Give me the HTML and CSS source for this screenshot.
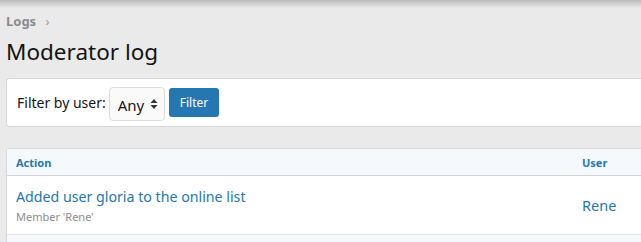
FILE: index.html
```html
<!DOCTYPE html>
<html lang="en">
<head>
    <meta charset="UTF-8">
    <title>Moderator log</title>
    <link rel="stylesheet" href="styles.css">
</head>
<body>

<div class="page">
    <!-- Breadcrumb -->
    <div class="crumbs">
        <a href="#">Logs</a>
        <span class="crumb-sep">&rsaquo;</span>
    </div>

    <h1 class="page-title">Moderator log</h1>

    <!-- Filter form -->
    <div class="block filter-block">
        <label for="userFilter">Filter by user:</label>
        <div class="select-wrap">
            <select id="userFilter" class="input-select">
                <option>Any</option>
            </select>
            <svg class="select-arrows" width="8" height="12" viewBox="0 0 8 12">
                <path d="M4 1 L7.5 5 H0.5 Z M4 11 L7.5 7 H0.5 Z" fill="#333"/>
            </svg>
        </div>
        <button class="button">Filter</button>
    </div>

    <!-- Log list -->
    <div class="block log-block">
        <div class="log-row log-head">
            <div class="cell-main">Action</div>
            <div class="cell-user">User</div>
        </div>
        <div class="log-row log-item">
            <div class="cell-main">
                <a href="#" class="log-action">Added user gloria to the online list</a>
                <div class="log-hint">Member 'Rene'</div>
            </div>
            <div class="cell-user"><a href="#">Rene</a></div>
        </div>
        <div class="log-footer"></div>
    </div>
</div>

</body>
</html>
```

FILE: styles.css
```css
body {
    margin: 0;
    padding: 0;
    background-color: #eaeaea;
    font-family: "Noto Sans", "Open Sans", sans-serif;
    color: #141414;
}
.page {
    padding: 12px 0 0 6px;
    background: linear-gradient(#b9b9b9, #eaeaea 8px);
}
a {
    text-decoration: none;
    color: #2577b1;
}
.crumbs {
    font-size: 13px;
    font-weight: bold;
    line-height: 18px;
}
.crumbs a {
    color: #8a8a8a;
}
.crumb-sep {
    color: #9a9a9a;
    font-weight: normal;
    margin-left: 6px;
}
.page-title {
    font-size: 22.5px;
    font-weight: normal;
    margin: 7px 0 0 0;
    line-height: 30px;
}
.block {
    background-color: #fff;
    border: 1px solid #d8d8d8;
    border-right: none;
    border-radius: 3px 0 0 3px;
}
.filter-block {
    margin-top: 11px;
    height: 49px;
    display: flex;
    align-items: center;
    padding-left: 10px;
    font-size: 14px;
    box-sizing: border-box;
}
.filter-block label {
    margin-right: 3px;
}
.select-wrap {
    position: relative;
    margin-right: 4px;
    margin-top: 2px;
}
.input-select {
    display: block;
    appearance: none;
    -webkit-appearance: none;
    height: 34px;
    width: 56px;
    padding: 2px 0 0 8px;
    font-family: inherit;
    font-size: 15px;
    color: #141414;
    background-color: #fafafa;
    border: 1px solid #dcdcdc;
    border-radius: 4px;
}
.select-arrows {
    position: absolute;
    right: 7px;
    top: 11px;
    pointer-events: none;
}
.button {
    height: 29px;
    padding: 0 11px;
    font-family: inherit;
    font-size: 12px;
    color: #fff;
    background-color: #2577b1;
    border: none;
    border-radius: 3px;
}
.log-block {
    margin-top: 21px;
    border-bottom: none;
    border-radius: 3px 0 0 0;
}
.log-row {
    display: flex;
    border-bottom: 1px solid #e3e3e3;
}
.log-head {
    background-color: #f5f9fd;
    border-bottom: 1px solid #d3d3d3;
    font-size: 11px;
    font-weight: bold;
    color: #2577b1;
    height: 26px;
    align-items: center;
}
.cell-main {
    flex: 1;
    padding-left: 9px;
}
.cell-user {
    width: 59px;
}
.log-item {
    height: 58px;
    align-items: center;
}
.log-action {
    font-size: 14.2px;
    line-height: 18px;
}
.log-hint {
    font-size: 11px;
    color: #8c8c8c;
    line-height: 16px;
    margin-top: 2px;
}
.cell-user a {
    font-size: 14.5px;
}
.log-footer {
    background-color: #f5f9fd;
    height: 7px;
}
```
